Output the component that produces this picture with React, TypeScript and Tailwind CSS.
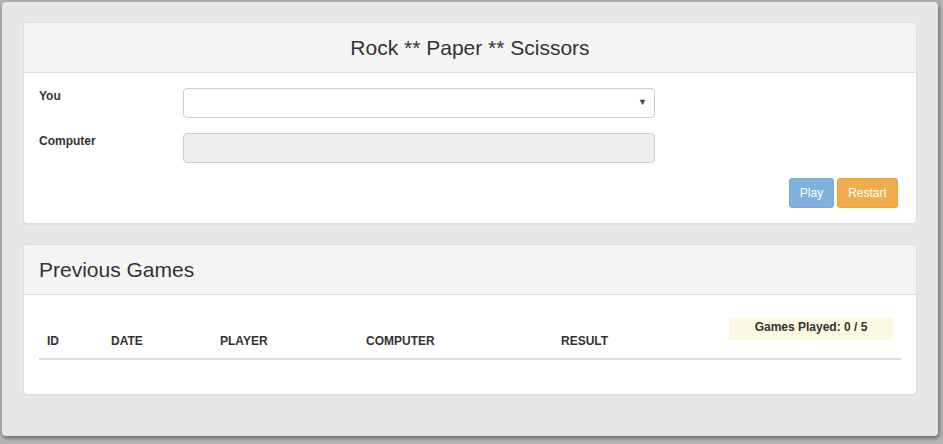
const font = { fontFamily: '"Liberation Sans", Arial, sans-serif' }

function Panel({ title, center, children }: { title: string; center?: boolean; children: React.ReactNode }) {
  return (
    <section className="rounded-[4px] border border-[#dddddd] bg-white shadow-[0_1px_1px_rgba(0,0,0,0.05)]">
      <div
        className={`h-[50px] rounded-t-[4px] border-b border-[#dddddd] bg-[#f5f5f5] px-[15px] text-[21px] leading-[49px] text-[#333333] ${center ? 'text-center' : 'text-left'}`}
      >
        {title}
      </div>
      {children}
    </section>
  )
}

const columns = [
  { label: 'ID', w: 'w-[64px]' },
  { label: 'DATE', w: 'w-[109px]' },
  { label: 'PLAYER', w: 'w-[146px]' },
  { label: 'COMPUTER', w: 'w-[195px]' },
  { label: 'RESULT', w: 'w-[168px]' },
]

export default function App() {
  return (
    <div className="h-[444px] w-[943px] overflow-hidden bg-[#b4b4b4] pl-[2px] pt-[2px]" style={font}>
      <div className="h-[434px] w-[936px] rounded-[4px] bg-[#e8e7e5] px-[21px] pt-[20px] shadow-[1px_2px_4px_rgba(0,0,0,0.45)]">
        <Panel title="Rock ** Paper ** Scissors" center>
          <div className="px-[15px] pb-[15px] pt-[15px] text-[12px] text-[#333333]">
            <div className="flex">
              <label className="w-[144px] font-bold leading-[17px]">You</label>
              <div className="relative h-[30px] w-[472px] rounded-[4px] border border-[#cccccc] bg-white">
                <span className="absolute right-[7px] top-[7px] text-[9px] text-[#444444]">▼</span>
              </div>
            </div>
            <div className="mt-[15px] flex">
              <label className="w-[144px] font-bold leading-[17px]">Computer</label>
              <div className="h-[30px] w-[472px] rounded-[4px] border border-[#cccccc] bg-[#eeeeee]" />
            </div>
            <div className="mt-[15px] flex justify-end gap-[3px] pr-[3px]">
              <button
                type="button"
                className="h-[30px] w-[45px] rounded-[3px] border border-[#7aa9d3] bg-[#81b2dd] text-[12px] text-white"
              >
                Play
              </button>
              <button
                type="button"
                className="h-[30px] w-[61px] rounded-[3px] border border-[#eea236] bg-[#f0ad4e] text-[12px] text-white"
              >
                Restart
              </button>
            </div>
          </div>
        </Panel>

        <div className="mt-[20px]">
          <Panel title="Previous Games">
            <div className="px-[15px] pb-[34px] pt-[15px]">
              <div className="flex border-b-2 border-[#dddddd] text-[12px] font-bold text-[#333333]">
                {columns.map((c) => (
                  <div key={c.label} className={`${c.w} flex h-[48px] items-end px-[8px] pb-[8px] leading-[17px]`}>
                    {c.label}
                  </div>
                ))}
                <div className="w-[180px] px-[8px] pt-[8px]">
                  <div className="h-[22px] bg-[#fcf8e3] text-center leading-[19px]">Games Played: 0 / 5</div>
                </div>
              </div>
            </div>
          </Panel>
        </div>
      </div>
    </div>
  )
}
